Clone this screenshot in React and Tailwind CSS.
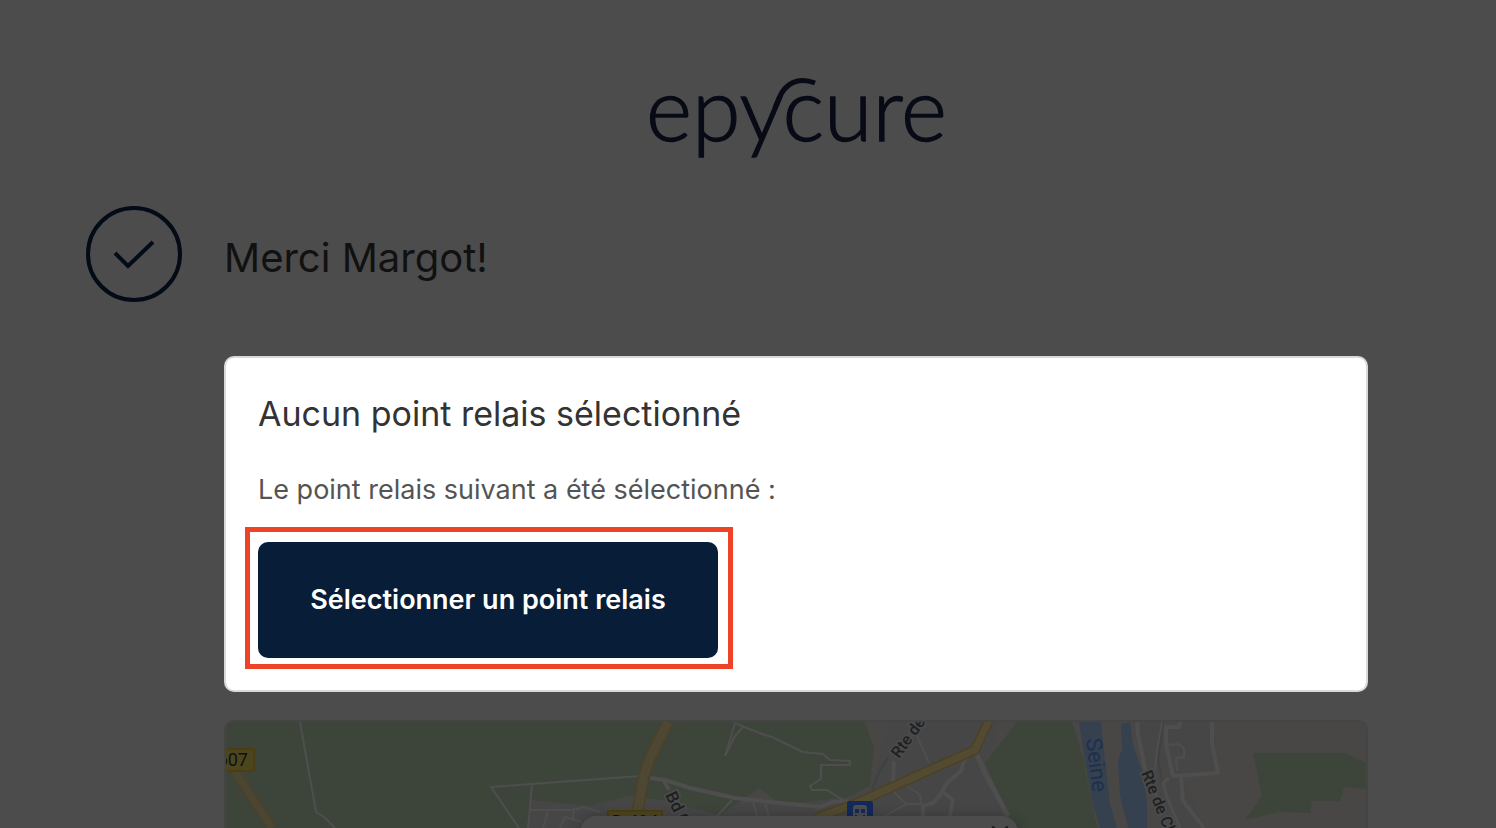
import { X } from 'lucide-react'

function Logo() {
  return (
    <svg viewBox="636 52 320 120" className="h-[120px] w-80 justify-self-center" role="img" aria-label="epycure">
      <text x="646" y="141" fill="#080b16" stroke="#080b16" strokeWidth="1.3" fontFamily="Lato" fontSize="88" fontWeight="300">
        epycure
      </text>
      <path d="M775 108 L779 98 C785 84 798 76 815 83" fill="none" stroke="#080b16" strokeWidth="5" />
    </svg>
  )
}

const greens = [
  '226,722 865,722 874,748 870,786 848,797 780,805 760,788 720,815 660,800 627,796 590,806 532,800 528,828 226,828',
  '1017,722 1072,722 1083,758 1095,818 1098,828 1010,828 1008,815 985,763',
  '1253,753 1345,753 1366,763 1366,789 1344,787 1340,801 1312,801 1310,813 1280,812 1245,820 1262,796',
]

const rivers = [
  '1079,722 1101,722 1105,760 1110,805 1117,828 1100,828 1093,805 1085,761',
  '1121,724 1130,722 1133,745 1142,771 1147,801 1147,828 1128,828 1120,795 1118,760 1122,750',
]

const streets = [
  { points: '300,722 316,812 324,817 335,828', width: 2 },
  { points: '519,828 491,787 640,776', width: 2 },
  { points: '532,785 528,828', width: 2 },
  { points: '530,810 574,810 583,807 600,812', width: 2 },
  { points: '548,812 543,828', width: 2 },
  { points: '574,808 573,820', width: 2 },
  { points: '560,828 565,817 582,822', width: 2 },
  { points: '650,778 665,780 690,788 735,798 770,802 820,807 833,802 848,801', width: 4 },
  { points: '664,781 669,790', width: 4 },
  { points: '732,800 717,816', width: 2 },
  { points: '753,803 757,816', width: 2 },
  { points: '765,804 769,816', width: 2 },
  { points: '725,756 735,723', width: 2 },
  { points: '725,756 735,736 743,727', width: 2 },
  { points: '735,723 747,728 765,735 772,737 803,752 823,754 830,760 850,761 850,765 821,765 821,779 810,786 812,790 827,790 843,800', width: 2 },
  { points: '894,761 893,782', width: 4 },
  { points: '917,736 929,763', width: 2 },
  { points: '894,785 895,793 906,804 921,804 920,795 907,786', width: 2 },
  { points: '906,804 885,816', width: 2 },
  { points: '965,757 961,771 947,783 940,795 933,803 923,806 923,816', width: 4 },
  { points: '942,791 953,800 950,816', width: 4 },
  { points: '977,755 985,773 1008,816', width: 5 },
  { points: '1137,722 1138,735 1145,768 1160,805', width: 4 },
  { points: '1162,722 1157,751 1155,770', width: 2 },
  { points: '1180,722 1179,727 1166,727 1166,745 1173,776 1218,773 1212,743 1212,722', width: 4 },
  { points: '1168,745 1178,744 1184,748 1184,757 1176,758 1177,771', width: 2 },
  { points: '1181,776 1183,801 1204,828', width: 4 },
  { points: '1169,778 1163,783 1167,797 1180,828', width: 3 },
]

const mainRoads = [
  { points: '229,762 272,828', width: 7, fill: '#4b4634' },
  { points: '668,722 650,758 644,776 637,815', width: 9, fill: '#4e4734' },
  { points: '990,718 975,750 923,773 857,803 817,818', width: 7, fill: '#524b32' },
]

function MapDrawing() {
  return (
    <svg viewBox="226 722 1140 106" preserveAspectRatio="xMidYMin slice" className="h-full w-full" role="img" aria-label="Carte">
      <rect x="226" y="722" width="1140" height="106" fill="#494745" />
      <polygon points="530,800 627,797 680,806 770,803 870,790 890,722 1000,722 985,765 1008,828 530,828" fill="#464646" />
      <polygon points="1138,722 1212,722 1218,773 1183,778 1204,828 1160,828 1145,770" fill="#464646" />
      {greens.map((p) => <polygon key={p} points={p} fill="#3d453b" />)}
      {rivers.map((p) => <polygon key={p} points={p} fill="#35414e" />)}

      <g fill="none" strokeLinejoin="round">
        <polyline points="888,758 880,770 872,790" stroke="#3f4041" strokeWidth="2" />
        <polyline points="1163,722 1158,760 1163,785 1175,815" stroke="#414141" strokeWidth="2" />
        {streets.map((s) => (
          <polyline key={s.points} points={s.points} stroke="#4e4e4e" strokeWidth={s.width} />
        ))}
        {mainRoads.map((r) => (
          <g key={r.points}>
            <polyline points={r.points} stroke="#4d4024" strokeWidth={r.width + 3} />
            <polyline points={r.points} stroke={r.fill} strokeWidth={r.width} />
          </g>
        ))}
      </g>

      {/* road badges */}
      <rect x="210" y="749" width="44" height="22" fill="#4c461f" stroke="#4d3c14" strokeWidth="2" />
      <rect x="608" y="811" width="54" height="22" fill="#4c461f" stroke="#4d3c14" strokeWidth="2" />
      <g fontFamily="Roboto" fontSize="18" fill="#101010">
        <text x="248" y="766" textAnchor="end">607</text>
        <text x="635" y="828" textAnchor="middle">D 484</text>
      </g>

      {/* street names */}
      <g fontFamily="Roboto" fontSize="16" fontWeight="500" fill="#1e2122" stroke="#4a4a4a" strokeWidth="4" paintOrder="stroke" strokeLinejoin="round">
        <text transform="translate(899 759) rotate(-54)">Rte de</text>
        <text transform="translate(665 795) rotate(64)" fontSize="17">Bd C</text>
        <text transform="translate(1141 773) rotate(68)">Rte de Ch</text>
      </g>
      <text transform="translate(1086 739) rotate(83)" fontFamily="Roboto" fontSize="22" fill="#1f2f50">Seine</text>

      {/* station */}
      <rect x="847" y="801" width="26" height="26" rx="3" fill="#13295a" />
      <rect x="853" y="805" width="14" height="18" rx="3" fill="#4b4d51" />
      <path d="M855 809h4v4h-4z M861 809h4v4h-4z M855 815h2v2h-2z M863 815h2v2h-2z" fill="#13295a" />
    </svg>
  )
}

export default function App() {
  return (
    <main className="grid h-screen grid-cols-[96px_minmax(0,1fr)] grid-rows-[auto_auto_auto_minmax(0,1fr)] gap-x-[42px] overflow-hidden bg-[#4c4c4c] pt-[52px] pr-32 pl-[86px] font-['Inter',sans-serif]">
      <header className="col-start-2 mb-[34px] grid">
        <Logo />
      </header>

      <div className="col-start-1 flex size-24 items-center justify-center rounded-full border-4 border-[#030b17]">
        <svg viewBox="0 0 42 30" className="h-[30px] w-[42px]" aria-hidden="true">
          <path d="M2 14 L15 27 L40 3" fill="none" stroke="#030b17" strokeWidth="4" />
        </svg>
      </div>
      <h1 className="self-center pt-2 text-[40px] leading-[52px] text-[#111]">Merci Margot!</h1>

      <section className="col-start-2 mt-[54px] rounded-[10px] border-2 border-[#d9d9d9] bg-white p-8">
        <h2 className="text-[34px] leading-[48px] text-[#333]">Aucun point relais sélectionné</h2>
        <p className="mt-8 text-[27px] leading-10 text-[#545454]">Le point relais suivant a été sélectionné :</p>
        <div className="relative mt-8 w-fit">
          <button type="button" className="h-[116px] w-[460px] rounded-[10px] bg-[#081d37] text-[27px] font-semibold text-white">
            Sélectionner un point relais
          </button>
          <span className="pointer-events-none absolute -top-[15px] -right-[15px] -bottom-[11px] -left-[13px] border-5 border-[#ee4326]" />
        </div>
      </section>

      <section className="relative col-start-2 mt-7 overflow-hidden rounded-t-[10px] border-2 border-b-0 border-[#444]">
        <MapDrawing />
        <div className="absolute top-[94px] left-[354px] flex h-40 w-[438px] items-start justify-end rounded-2xl bg-[#4c4c4c] px-1 pt-1 shadow-[0_2px_14px_rgba(0,0,0,0.3)]">
          <button type="button" aria-label="Fermer">
            <X className="size-7 text-[#202020]" />
          </button>
        </div>
      </section>
    </main>
  )
}
